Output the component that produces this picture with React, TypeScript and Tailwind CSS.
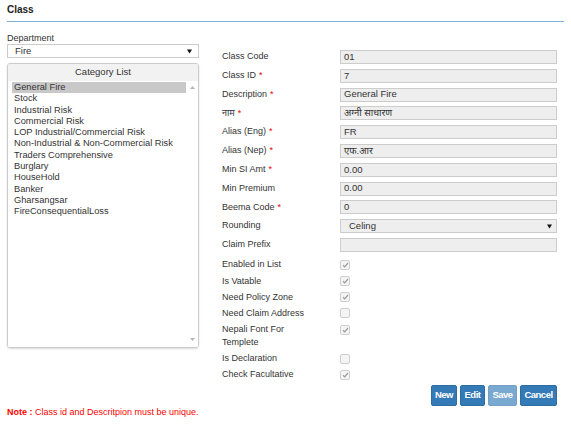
import React from "react";

const CATEGORIES = [
  "General Fire",
  "Stock",
  "Industrial Risk",
  "Commercial Risk",
  "LOP Industrial/Commercial Risk",
  "Non-Industrial & Non-Commercial Risk",
  "Traders Comprehensive",
  "Burglary",
  "HouseHold",
  "Banker",
  "Gharsangsar",
  "FireConsequentialLoss",
];

type Field = { label: string; required?: boolean; value?: string; select?: boolean };

const FIELDS: Field[] = [
  { label: "Class Code", value: "01" },
  { label: "Class ID", required: true, value: "7" },
  { label: "Description", required: true, value: "General Fire" },
  { label: "नाम", required: true, value: "अग्नी  साधारण" },
  { label: "Alias (Eng)", required: true, value: "FR" },
  { label: "Alias (Nep)", required: true, value: "एफ.आर" },
  { label: "Min SI Amt", required: true, value: "0.00" },
  { label: "Min Premium", value: "0.00" },
  { label: "Beema Code", required: true, value: "0" },
  { label: "Rounding", value: "Celing", select: true },
  { label: "Claim Prefix", value: "" },
];

const CHECKS = [
  { label: "Enabled in List", checked: true },
  { label: "Is Vatable", checked: true },
  { label: "Need Policy Zone", checked: true },
  { label: "Need Claim Address", checked: false },
  { label: "Nepali Font For Templete", checked: true },
  { label: "Is Declaration", checked: false },
  { label: "Check Facultative", checked: true },
];

function Caret() {
  return (
    <svg width="5" height="5" viewBox="0 0 5 5" aria-hidden>
      <path d="M0 0.5h5L2.5 4.5z" fill="#111" />
    </svg>
  );
}

function CheckBox({ checked }: { checked: boolean }) {
  return (
    <span className="mt-[3px] flex h-[10px] w-[10px] shrink-0 items-center justify-center rounded-[2px] border border-[#cfcfcf] bg-[#f4f4f4]">
      {checked && (
        <svg width="7" height="6" viewBox="0 0 7 6" aria-hidden>
          <path d="M1 3.2l1.7 1.6L6 1" fill="none" stroke="#9a9a9a" strokeWidth="1.2" />
        </svg>
      )}
    </span>
  );
}

function Label({ text, required }: { text: string; required?: boolean }) {
  return (
    <span className="w-[118px] shrink-0">
      {text}
      {required && <span className="ml-[3px] text-[9px] text-[#e00]">*</span>}
    </span>
  );
}

export default function App() {
  return (
    <div
      className="h-[426px] w-[571px] overflow-hidden bg-white px-[7px] text-[9px] text-[#333]"
      style={{ fontFamily: '"Liberation Sans", Arial, "Noto Sans", sans-serif' }}
    >
      <div className="pt-[3px] text-[10px] font-bold leading-[14px] text-[#222]">Class</div>
      <div className="mt-[4px] h-px bg-[#7fb0e0]" />

      <div className="flex">
        {/* left column */}
        <div className="w-[192px] shrink-0">
          <div className="mt-[10px] leading-[12px]">Department</div>
          <div className="flex h-[14px] items-center justify-between border border-[#cccccc] bg-white pl-[7px] pr-[6px] text-[9.5px]">
            <span>Fire</span>
            <Caret />
          </div>

          <div className="mt-[5px] flex h-[285px] flex-col overflow-hidden rounded-[3px] border border-[#cccccc] shadow-[0_1px_2px_rgba(0,0,0,0.15)]">
            <div className="flex h-[17px] items-center justify-center bg-[#f2f2f2] text-[9.5px]">
              Category List
            </div>
            <div className="flex flex-1 bg-white pl-[4px]">
              <ul className="flex-1 pt-[1px] text-[9.25px] leading-[11.3px]">
                {CATEGORIES.map((c, i) => (
                  <li key={c} className={i === 0 ? "bg-[#c8c8c8] pl-[2px]" : "pl-[2px]"}>
                    {c}
                  </li>
                ))}
              </ul>
              <div className="flex w-[12px] flex-col items-center justify-between pb-[6px] pt-[5px]">
                <svg width="5" height="3" viewBox="0 0 5 3" aria-hidden>
                  <path d="M0 3h5L2.5 0z" fill="#b5b5b5" />
                </svg>
                <svg width="5" height="3" viewBox="0 0 5 3" aria-hidden>
                  <path d="M0 0h5L2.5 3z" fill="#b5b5b5" />
                </svg>
              </div>
            </div>
          </div>
        </div>

        {/* right column */}
        <div className="ml-[23px] w-[335px]">
          <div className="mt-[28px] flex flex-col gap-[4.8px]">
            {FIELDS.map((f) => (
              <div key={f.label} className="flex h-[14px] items-center">
                <Label text={f.label} required={f.required} />
                {f.select ? (
                  <div className="flex h-[14px] flex-1 items-center justify-between border border-[#cccccc] bg-[#eeeeee] pl-[8px] pr-[4px] text-[9.5px]">
                    <span>{f.value}</span>
                    <Caret />
                  </div>
                ) : (
                  <div className="flex h-[14px] flex-1 items-center border border-[#cccccc] bg-[#eeeeee] pl-[3px] text-[9.5px]">
                    {f.value}
                  </div>
                )}
              </div>
            ))}
          </div>

          <div className="mt-[4.8px] flex flex-col">
            {CHECKS.map((c) => (
              <div key={c.label} className="flex items-start">
                <span className="w-[90px] shrink-0 py-[1.6px] leading-[13px]">{c.label}</span>
                <span className="ml-[28px]">
                  <CheckBox checked={c.checked} />
                </span>
              </div>
            ))}
          </div>

          <div className="mt-[1.6px] flex justify-end gap-[3px] text-[9.5px] font-bold tracking-[-0.5px] text-white">
            <button className="h-[21px] w-[26px] rounded-[2px] border border-[#2e6da4] bg-[#337ab7]">New</button>
            <button className="h-[21px] w-[25px] rounded-[2px] border border-[#2e6da4] bg-[#337ab7]">Edit</button>
            <button className="h-[21px] w-[29px] rounded-[2px] border border-[#2e6da4] bg-[#337ab7] opacity-65">
              Save
            </button>
            <button className="h-[21px] w-[37px] rounded-[2px] border border-[#2e6da4] bg-[#337ab7]">Cancel</button>
          </div>
        </div>
      </div>

      <div className="mt-[1.5px] leading-[11px] text-[#f00]">
        <span className="font-bold">Note :</span> Class id and Descritpion must be unique.
      </div>
    </div>
  );
}
